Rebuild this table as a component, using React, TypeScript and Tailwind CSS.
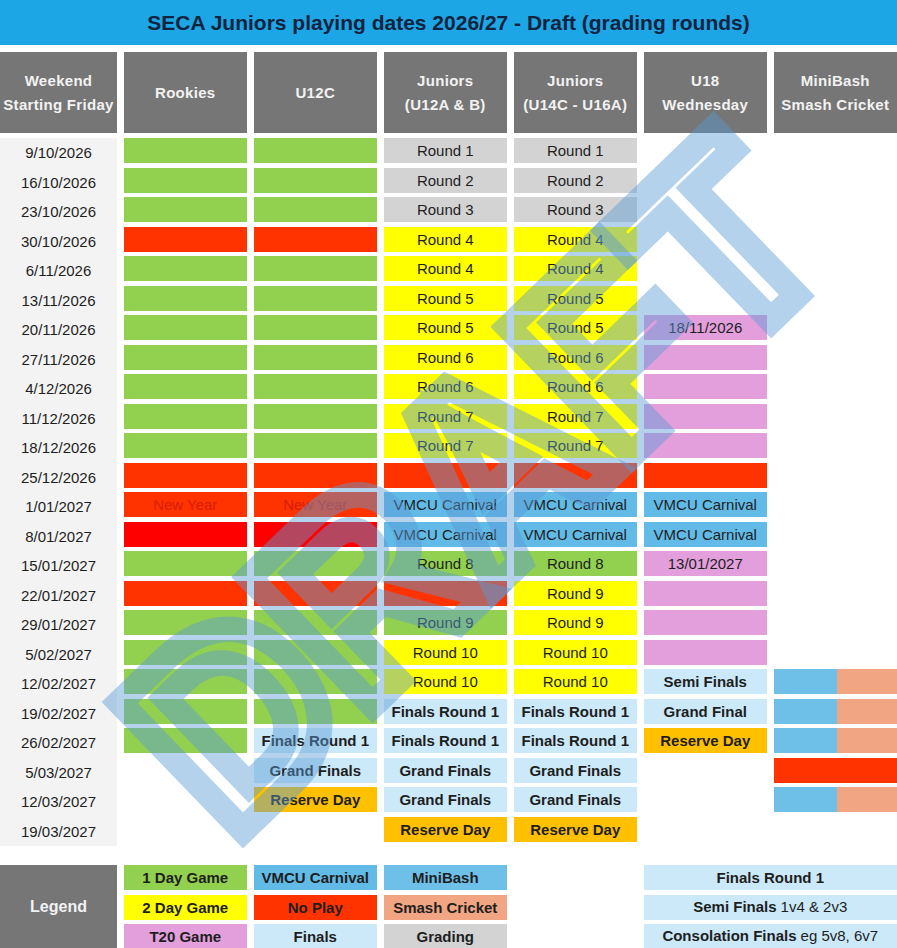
import React from 'react';

type Cell = { c: string; t?: string; b?: boolean; tc?: string; split?: boolean } | null;

const G: Cell = { c: 'bg-[#92d050]' };
const R: Cell = { c: 'bg-[#ff3300]' };
const RR: Cell = { c: 'bg-[#ff0000]' };
const P: Cell = { c: 'bg-[#e29fdc]' };
const S: Cell = { c: '', split: true };
const gr = (t: string): Cell => ({ c: 'bg-[#d3d3d3]', t });
const y = (t: string): Cell => ({ c: 'bg-[#ffff00]', t });
const g = (t: string): Cell => ({ c: 'bg-[#92d050]', t });
const p = (t: string): Cell => ({ c: 'bg-[#e29fdc]', t });
const v: Cell = { c: 'bg-[#62bbe7]', t: 'VMCU Carnival' };
const lb = (t: string): Cell => ({ c: 'bg-[#cbe9f8]', t, b: true });
const od: Cell = { c: 'bg-[#ffc000]', t: 'Reserve Day', b: true };
const ny: Cell = { c: 'bg-[#ff3300]', t: 'New Year', tc: 'text-[#d91c06]' };

const rows: [string, Cell[]][] = [
  ['9/10/2026', [G, G, gr('Round 1'), gr('Round 1'), null, null]],
  ['16/10/2026', [G, G, gr('Round 2'), gr('Round 2'), null, null]],
  ['23/10/2026', [G, G, gr('Round 3'), gr('Round 3'), null, null]],
  ['30/10/2026', [R, R, y('Round 4'), y('Round 4'), null, null]],
  ['6/11/2026', [G, G, y('Round 4'), y('Round 4'), null, null]],
  ['13/11/2026', [G, G, y('Round 5'), y('Round 5'), null, null]],
  ['20/11/2026', [G, G, y('Round 5'), y('Round 5'), p('18/11/2026'), null]],
  ['27/11/2026', [G, G, y('Round 6'), y('Round 6'), P, null]],
  ['4/12/2026', [G, G, y('Round 6'), y('Round 6'), P, null]],
  ['11/12/2026', [G, G, y('Round 7'), y('Round 7'), P, null]],
  ['18/12/2026', [G, G, y('Round 7'), y('Round 7'), P, null]],
  ['25/12/2026', [R, R, R, R, R, null]],
  ['1/01/2027', [ny, ny, v, v, v, null]],
  ['8/01/2027', [RR, RR, v, v, v, null]],
  ['15/01/2027', [G, G, g('Round 8'), g('Round 8'), p('13/01/2027'), null]],
  ['22/01/2027', [R, R, R, y('Round 9'), P, null]],
  ['29/01/2027', [G, G, g('Round 9'), y('Round 9'), P, null]],
  ['5/02/2027', [G, G, y('Round 10'), y('Round 10'), P, null]],
  ['12/02/2027', [G, G, y('Round 10'), y('Round 10'), lb('Semi Finals'), S]],
  ['19/02/2027', [G, G, lb('Finals Round 1'), lb('Finals Round 1'), lb('Grand Final'), S]],
  ['26/02/2027', [G, lb('Finals Round 1'), lb('Finals Round 1'), lb('Finals Round 1'), od, S]],
  ['5/03/2027', [null, lb('Grand Finals'), lb('Grand Finals'), lb('Grand Finals'), null, R]],
  ['12/03/2027', [null, od, lb('Grand Finals'), lb('Grand Finals'), null, S]],
  ['19/03/2027', [null, null, od, od, null, null]],
];

const GRID = 'grid grid-cols-[117px_repeat(6,minmax(0,1fr))] gap-x-[6.5px]';

function CellView({ cell }: { cell: Cell }) {
  if (!cell) return <div />;
  if (cell.split) {
    return (
      <div className="flex h-[25px]">
        <div className="w-[63px] bg-[#6fc0e8]" />
        <div className="flex-1 bg-[#f1a582]" />
      </div>
    );
  }
  return (
    <div
      className={`${cell.c} flex h-[25px] items-center justify-center text-[15px] leading-none ${
        cell.b ? 'font-bold' : ''
      } ${cell.tc ?? 'text-[#1e1e1e]'}`}
    >
      {cell.t}
    </div>
  );
}

const headers = [
  ['Weekend', 'Starting Friday'],
  ['Rookies'],
  ['U12C'],
  ['Juniors', '(U12A & B)'],
  ['Juniors', '(U14C - U16A)'],
  ['U18', 'Wednesday'],
  ['MiniBash', 'Smash Cricket'],
];

export default function App() {
  return (
    <div className="relative h-[948px] w-[897px] overflow-hidden bg-white font-['Liberation_Sans',Arial,sans-serif]">
      <div className="flex h-[45px] items-center justify-center bg-[#1ca6e6] text-[21px] font-bold text-[#13233d]">
        SECA Juniors playing dates 2026/27 - Draft (grading rounds)
      </div>

      <div className={`${GRID} mt-[7px] h-[81px]`}>
        {headers.map((h, i) => (
          <div
            key={i}
            className="flex flex-col items-center justify-center bg-[#767676] text-[15px] font-bold leading-[24px] tracking-[0.3px] text-[#f2f2f2]"
          >
            {h.map((l) => (
              <span key={l}>{l}</span>
            ))}
          </div>
        ))}
      </div>

      <div className="mt-[5px]">
        {rows.map(([d, cells]) => (
          <div key={d} className={`${GRID} h-[29.5px]`}>
            <div className="flex h-full items-start justify-center bg-[#f3f3f3] pt-[4px] text-[15px] text-[#1e1e1e]">
              {d}
            </div>
            {cells.map((c, i) => (
              <CellView key={i} cell={c} />
            ))}
          </div>
        ))}
      </div>

      <div className={`${GRID} mt-[19px] grid-rows-[29.5px_29.5px_29.5px]`}>
        <div className="row-span-3 flex items-center justify-center bg-[#767676] pb-[4px] text-[16px] font-bold text-[#f2f2f2]">
          Legend
        </div>
        <CellView cell={{ c: 'bg-[#92d050]', t: '1 Day Game', b: true }} />
        <CellView cell={{ c: 'bg-[#62bbe7]', t: 'VMCU Carnival', b: true }} />
        <CellView cell={{ c: 'bg-[#6fc0e8]', t: 'MiniBash', b: true }} />
        <div />
        <div className="col-span-2">
          <CellView cell={{ c: 'bg-[#cbe9f8]', t: 'Finals Round 1', b: true }} />
        </div>

        <CellView cell={{ c: 'bg-[#ffff00]', t: '2 Day Game', b: true }} />
        <CellView cell={{ c: 'bg-[#ff3300]', t: 'No Play', b: true }} />
        <CellView cell={{ c: 'bg-[#f1a582]', t: 'Smash Cricket', b: true }} />
        <div />
        <div className="col-span-2 flex h-[25px] items-center justify-center bg-[#cbe9f8] text-[15px] text-[#1e1e1e]">
          <span className="font-bold">Semi Finals</span>
          <span className="ml-[4px]">1v4 &amp; 2v3</span>
        </div>

        <CellView cell={{ c: 'bg-[#e29fdc]', t: 'T20 Game', b: true }} />
        <CellView cell={{ c: 'bg-[#cbe9f8]', t: 'Finals', b: true }} />
        <CellView cell={{ c: 'bg-[#d3d3d3]', t: 'Grading', b: true }} />
        <div />
        <div className="col-span-2 flex h-[25px] items-center justify-center bg-[#cbe9f8] text-[15px] text-[#1e1e1e]">
          <span className="font-bold">Consolation Finals</span>
          <span className="ml-[4px]">eg 5v8, 6v7</span>
        </div>
      </div>

      <svg
        className="pointer-events-none absolute left-0 top-0"
        width="897"
        height="948"
        viewBox="0 0 897 948"
      >
        <text
          x="231"
          y="842"
          transform="rotate(-44 231 842)"
          fontFamily="Liberation Sans, Arial, sans-serif"
          fontWeight="700"
          fontSize="258"
          textLength="845"
          lengthAdjust="spacingAndGlyphs"
          fill="none"
          stroke="#5b9bd5"
          strokeOpacity="0.45"
          strokeWidth="26"
          strokeLinejoin="miter"
        >
          DRAFT
        </text>
      </svg>
    </div>
  );
}
